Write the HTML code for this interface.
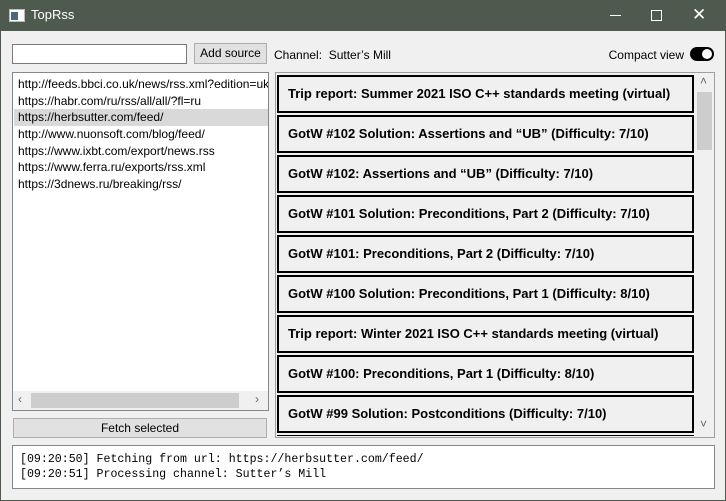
<!DOCTYPE html><html><head><style>
*{box-sizing:border-box;margin:0;padding:0}
body{width:726px;height:501px;background:#4f5a4f;font-family:"Liberation Sans",sans-serif;font-size:12px;position:relative;overflow:hidden}
.win{position:absolute;left:1px;top:31px;width:724px;height:469px;background:#f0f0f0}
.a{position:absolute}
.title{left:0;top:0;width:726px;height:31px;color:#fff}
.item{position:absolute;left:277px;width:417px;height:38px;border:2px solid #000;background:#f0f0f0;font-weight:bold;font-size:13px;padding:9px 0 0 9px;white-space:nowrap;overflow:hidden}
.li{position:absolute;left:1px;width:254px;height:17px;padding-left:4px;line-height:17px;white-space:nowrap;overflow:hidden}
</style></head><body>
<div class="a title">
<div class="a" style="left:9px;top:9px;width:16px;height:13px;background:#fff;border:1px solid #bbb"><div style="position:absolute;left:1px;top:2px;width:7px;height:8px;background:#4a6a7a"></div></div>
<div class="a" style="left:31px;top:7px;font-size:13px">TopRss</div>
<div class="a" style="left:610px;top:15px;width:11px;height:1px;background:#fff"></div>
<div class="a" style="left:651px;top:10px;width:11px;height:11px;border:1px solid #fff"></div>
<div class="a" style="left:692px;top:5px;font-size:17px;color:#fff">✕</div>
</div>
<div class="win"></div>
<div class="a" style="left:12px;top:44px;width:175px;height:20px;background:#fff;border:1px solid #7a7a7a"></div>
<div class="a" style="left:194px;top:43px;width:73px;height:21px;background:#e1e1e1;border:1px solid #adadad;text-align:center;line-height:19px">Add source</div>
<div class="a" style="left:274px;top:48px">Channel:&nbsp; Sutter’s Mill</div>
<div class="a" style="left:584px;top:48px;width:100px;text-align:right">Compact view</div>
<div class="a" style="left:690px;top:47px;width:24px;height:14px;border-radius:7px;background:#000"><div style="position:absolute;right:2px;top:2px;width:10px;height:10px;border-radius:5px;background:#fff"></div></div>
<div class="a" style="left:12px;top:72px;width:257px;height:339px;background:#fff;border:1px solid #828790">
<div class="li" style="top:3px">http://feeds.bbci.co.uk/news/rss.xml?edition=uk</div>
<div class="li" style="top:20px">https://habr.com/ru/rss/all/all/?fl=ru</div>
<div class="li" style="top:36px;background:#d9d9d9">https://herbsutter.com/feed/</div>
<div class="li" style="top:53px">http://www.nuonsoft.com/blog/feed/</div>
<div class="li" style="top:70px">https://www.ixbt.com/export/news.rss</div>
<div class="li" style="top:86px">https://www.ferra.ru/exports/rss.xml</div>
<div class="li" style="top:103px">https://3dnews.ru/breaking/rss/</div>
<div class="a" style="left:0;top:318px;width:255px;height:19px;background:#f0f0f0"><div class="a" style="left:18px;top:2px;width:208px;height:15px;background:#cdcdcd"></div><div class="a" style="left:5px;top:1px;color:#666">‹</div><div class="a" style="left:242px;top:1px;color:#666">›</div></div>
</div>
<div class="a" style="left:13px;top:418px;width:254px;height:20px;background:#e1e1e1;border:1px solid #adadad;text-align:center;line-height:18px">Fetch selected</div>
<div class="a" style="left:275px;top:72px;width:440px;height:366px;border:1px solid #a0a0a0;background:#f0f0f0;overflow:hidden">
<div class="a" style="left:420px;top:1px;width:17px;height:362px;background:#f0f0f0"><div class="a" style="left:1px;top:18px;width:15px;height:58px;background:#cdcdcd"></div><div class="a" style="left:4px;top:0;color:#666">˄</div><div class="a" style="left:4px;top:343px;color:#666">˅</div></div>
</div>
<div class="item" style="top:75px">Trip report: Summer 2021 ISO C++ standards meeting (virtual)</div>
<div class="item" style="top:115px">GotW #102 Solution: Assertions and “UB” (Difficulty: 7/10)</div>
<div class="item" style="top:155px">GotW #102: Assertions and “UB” (Difficulty: 7/10)</div>
<div class="item" style="top:195px">GotW #101 Solution: Preconditions, Part 2 (Difficulty: 7/10)</div>
<div class="item" style="top:235px">GotW #101: Preconditions, Part 2 (Difficulty: 7/10)</div>
<div class="item" style="top:275px">GotW #100 Solution: Preconditions, Part 1 (Difficulty: 8/10)</div>
<div class="item" style="top:315px">Trip report: Winter 2021 ISO C++ standards meeting (virtual)</div>
<div class="item" style="top:355px">GotW #100: Preconditions, Part 1 (Difficulty: 8/10)</div>
<div class="item" style="top:395px">GotW #99 Solution: Postconditions (Difficulty: 7/10)</div>
<div class="a" style="left:277px;top:435px;width:417px;height:2px;border-top:1px solid #000"></div>
<div class="a" style="left:12px;top:445px;width:703px;height:44px;background:#fff;border:1px solid #828790;font-family:'Liberation Mono',monospace;font-size:11.6px;padding:6px 0 0 7px;line-height:15px">[09:20:50] Fetching from url: https://herbsutter.com/feed/<br>[09:20:51] Processing channel: Sutter’s Mill</div>
</body></html>
